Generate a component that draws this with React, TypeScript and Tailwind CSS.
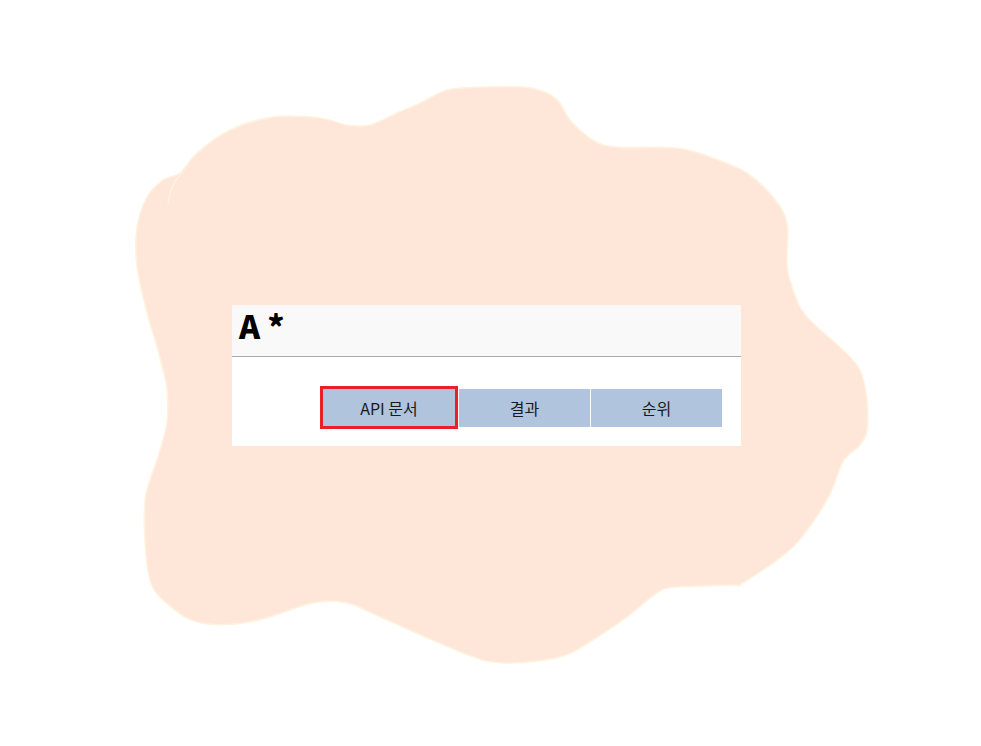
const outline: [number, number][] = [
  [560, 103], [570, 120], [593, 140], [617, 147], [677, 148], [710, 157], [747, 173],
  [773, 197], [787, 223], [787, 263], [790, 280], [800, 307], [813, 323], [843, 350],
  [860, 370], [867, 400], [867, 430], [860, 445], [843, 462], [827, 500], [793, 547],
  [743, 583], [733, 585], [677, 587], [657, 593], [627, 617], [593, 640], [560, 657],
  [503, 663], [463, 653], [380, 617], [347, 603], [313, 603], [250, 622], [197, 622],
  [163, 600], [150, 580], [145, 543], [145, 500], [150, 480], [160, 450], [167, 422],
  [167, 390], [163, 370], [155, 340], [147, 313], [137, 267], [137, 227], [147, 197],
  [163, 180], [180, 173], [197, 153], [230, 130], [273, 117], [320, 118], [347, 125],
  [370, 125], [397, 113], [420, 103], [447, 90], [480, 87], [523, 87], [547, 93],
];

// closed catmull-rom -> cubic bezier
function smoothPath(pts: [number, number][]) {
  const n = pts.length;
  let d = `M${pts[0][0]},${pts[0][1]}`;
  for (let i = 0; i < n; i++) {
    const p0 = pts[(i - 1 + n) % n];
    const p1 = pts[i];
    const p2 = pts[(i + 1) % n];
    const p3 = pts[(i + 2) % n];
    const c1x = p1[0] + (p2[0] - p0[0]) / 6;
    const c1y = p1[1] + (p2[1] - p0[1]) / 6;
    const c2x = p2[0] - (p3[0] - p1[0]) / 6;
    const c2y = p2[1] - (p3[1] - p1[1]) / 6;
    d += ` C${c1x.toFixed(1)},${c1y.toFixed(1)} ${c2x.toFixed(1)},${c2y.toFixed(1)} ${p2[0]},${p2[1]}`;
  }
  return d + 'Z';
}

const kr = 'font-["Noto_Sans_CJK_KR",sans-serif]';

export default function App() {
  return (
    <div className="relative w-[981px] h-[746px] bg-white overflow-hidden">
      <svg className="absolute inset-0" width="981" height="746" viewBox="0 0 981 746">
        <path d={smoothPath(outline)} fill="#fee7d9" stroke="#fff3e0" strokeWidth="1.5" />
        <path d="M183,172 C176,178 170,188 168,204" fill="none" stroke="#fff3e0" strokeWidth="1.2" />
      </svg>

      <div className="relative pt-[305px] pl-[232px]">
        <div className="w-[509px] bg-white">
          <div className="h-[52px] bg-[#f9f9f9] border-b border-[#aaaaaa] pl-[7px]">
            <h1 className={`text-[32px] leading-[40px] font-black text-black ${kr}`}>A *</h1>
          </div>
          <div className="h-[89px] pt-[29px] pl-[88px]">
            <div className="flex items-start gap-px">
              <button className={`w-[138px] h-[43px] border-[3px] border-[#e8202a] bg-[#b0c4de] text-[16px] text-[#1a1a1a] ${kr}`}>
                API 문서
              </button>
              <button className={`mt-[3px] w-[131px] h-[38px] bg-[#b0c4de] text-[16px] text-[#1a1a1a] ${kr}`}>
                결과
              </button>
              <button className={`mt-[3px] w-[131px] h-[38px] bg-[#b0c4de] text-[16px] text-[#1a1a1a] ${kr}`}>
                순위
              </button>
            </div>
          </div>
        </div>
      </div>
    </div>
  );
}
